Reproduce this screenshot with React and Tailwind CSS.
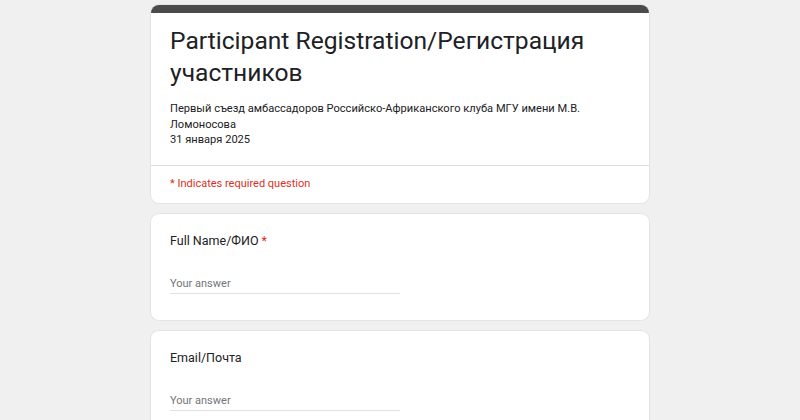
export default function App() {
  const font = { fontFamily: 'Roboto, "Noto Sans", Arial, sans-serif' };
  return (
    <div className="min-h-[420px] w-full bg-[#f0f0f0] text-[#202124]" style={font}>
      <div className="mx-auto flex w-[498px] flex-col gap-[11px] pt-[5px]">
        <div className="overflow-hidden rounded-[8px] bg-white shadow-[0_0_0_1px_#e3e3e3]">
          <div className="h-[8px] bg-[#4b4b4b]" />
          <div className="px-[19px] pb-[17px] pt-[12px]">
            <h1 className="text-[24.6px] leading-[32px] font-normal tracking-[0px]">
              Participant Registration/Регистрация участников
            </h1>
            <div className="mt-[12px] text-[11.1px] leading-[15.5px]">
              <div>Первый съезд амбассадоров Российско-Африканского клуба МГУ имени М.В. Ломоносова</div>
              <div>31 января 2025</div>
            </div>
          </div>
          <div className="border-t border-[#dadce0] px-[19px] pb-[11px] pt-[10px] text-[11px] leading-[16px] text-[#d93025]">
            * Indicates required question
          </div>
        </div>

        <Question label="Full Name/ФИО" required />
        <Question label="Email/Почта" />
      </div>
    </div>
  );
}

function Question({ label, required }) {
  return (
    <div className="rounded-[8px] bg-white px-[19px] pb-[26px] pt-[18px] shadow-[0_0_0_1px_#e3e3e3]">
      <div className="text-[12.5px] leading-[18px]">
        {label}
        {required && <span className="text-[#d93025]"> *</span>}
      </div>
      <div className="mt-[26px] w-[230px] border-b border-[#e0e0e0] pb-[1px] text-[11px] leading-[16px] text-[#70757a]">
        Your answer
      </div>
    </div>
  );
}
